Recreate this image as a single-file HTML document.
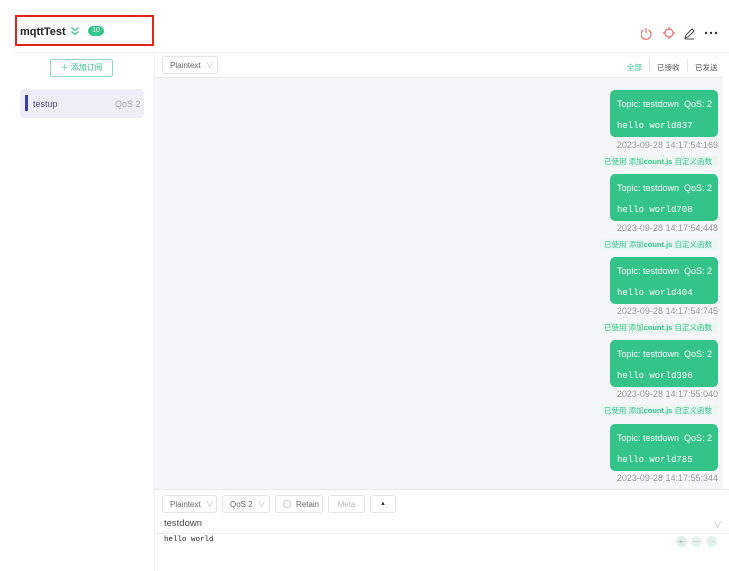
<!DOCTYPE html><html><head><meta charset="utf-8"><style>
*{box-sizing:border-box;margin:0;padding:0}
body{width:729px;height:571px;background:#fff;font-family:"Liberation Sans","Noto Sans CJK SC",sans-serif;position:relative;overflow:hidden;color:#333}
.a{position:absolute}
.sel{border:1px solid #e4e4e4;border-radius:3px;font-size:8px;color:#666;display:flex;align-items:center;padding:0 7px;height:18px;background:#fff;white-space:nowrap}
.bub{position:absolute;left:610px;width:108px;height:47px;background:#34c388;border-radius:5px;color:#fff}
.bub .t{position:absolute;left:7px;top:9px;font-size:9px}
.bub .q{position:absolute;right:6px;top:9px;font-size:9px}
.bub .m{position:absolute;left:7px;top:31px;font-size:9px;font-family:"Liberation Mono",monospace}
.ts{position:absolute;right:11px;font-size:9px;color:#999}
.tag{position:absolute;left:601px;width:117px;height:11px;background:#eaf8f1;font-size:7.5px;color:#34c388;line-height:11px;padding-left:3px;white-space:nowrap}
</style></head><body>
<div class="a" style="left:15px;top:15px;width:139px;height:31px;border:2px solid #e1251b"></div>
<div class="a" style="left:20px;top:26px;font-size:11px;font-weight:bold;color:#222">mqttTest</div>
<svg class="a" style="left:70px;top:26px" width="10" height="10"><path d="M1.5 1.5l3.5 3 3.5-3M1.5 5.5l3.5 3 3.5-3" fill="none" stroke="#34c388" stroke-width="1.2"/></svg>
<div class="a" style="left:88px;top:26px;width:16px;height:10px;border-radius:5px;background:#34c388;color:#fff;font-size:7px;text-align:center;line-height:10px">10</div>
<svg class="a" style="left:641px;top:26px" width="80" height="14"><g fill="none" stroke="#e66" stroke-width="1.2"><path d="M5 2v5M2.5 4a5 5 0 1 0 5 0"/><circle cx="28" cy="7" r="4"/><path d="M28 1v2M28 11v2M22 7h2M32 7h2"/></g><path d="M44 12l1-3 6-6 2 2-6 6zM44 13h9" fill="none" stroke="#444" stroke-width="1"/><g fill="#333"><circle cx="65" cy="7" r="1.2"/><circle cx="70" cy="7" r="1.2"/><circle cx="75" cy="7" r="1.2"/></g></svg>
<div class="a" style="left:15px;top:52px;width:714px;height:1px;background:#eee"></div>
<div class="a" style="left:154px;top:52px;width:1px;height:519px;background:#eee"></div>
<div class="a" style="left:50px;top:59px;width:63px;height:18px;border:1px solid #8ed9b7;border-radius:2px;font-size:8px;color:#34c388;text-align:center;line-height:16px">＋ 添加订阅</div>
<div class="a" style="left:20px;top:89px;width:124px;height:29px;background:#eeeef8;border-radius:4px"></div>
<div class="a" style="left:25px;top:95px;width:3px;height:16px;background:#3b3ea8"></div>
<div class="a" style="left:33px;top:99px;font-size:9px;color:#4a4a8a">testup</div>
<div class="a" style="left:115px;top:99px;font-size:9px;color:#aaa">QoS 2</div>
<div class="a" style="left:155px;top:78px;width:568px;height:411px;background:#f5f6f8"></div>
<div class="a" style="left:155px;top:77px;width:568px;height:1px;background:#e8e8e8"></div>
<div class="sel a" style="left:162px;top:56px;height:18px;width:56px">Plaintext <span style="margin-left:5px;color:#bbb">&#8744;</span></div>
<div class="a" style="left:627px;top:62px;font-size:7.5px;color:#34c388">全部</div>
<div class="a" style="left:657px;top:62px;font-size:7.5px;color:#555">已接收</div>
<div class="a" style="left:695px;top:62px;font-size:7.5px;color:#555">已发送</div>
<div class="a" style="left:649px;top:59px;width:1px;height:13px;background:#e5e5e5"></div>
<div class="a" style="left:687px;top:59px;width:1px;height:13px;background:#e5e5e5"></div>

<div class="bub" style="top:90px"><span class="t">Topic: testdown</span><span class="q">QoS: 2</span><span class="m">hello world837</span></div>
<div class="ts" style="top:140px">2023-09-28 14:17:54:169</div>
<div class="tag" style="top:156px">已使用 添加<b>count.js</b> 自定义函数</div>
<div class="bub" style="top:174px"><span class="t">Topic: testdown</span><span class="q">QoS: 2</span><span class="m">hello world708</span></div>
<div class="ts" style="top:223px">2023-09-28 14:17:54:448</div>
<div class="tag" style="top:239px">已使用 添加<b>count.js</b> 自定义函数</div>
<div class="bub" style="top:257px"><span class="t">Topic: testdown</span><span class="q">QoS: 2</span><span class="m">hello world404</span></div>
<div class="ts" style="top:306px">2023-09-28 14:17:54:745</div>
<div class="tag" style="top:322px">已使用 添加<b>count.js</b> 自定义函数</div>
<div class="bub" style="top:340px"><span class="t">Topic: testdown</span><span class="q">QoS: 2</span><span class="m">hello world396</span></div>
<div class="ts" style="top:389px">2023-09-28 14:17:55:040</div>
<div class="tag" style="top:405px">已使用 添加<b>count.js</b> 自定义函数</div>
<div class="bub" style="top:424px"><span class="t">Topic: testdown</span><span class="q">QoS: 2</span><span class="m">hello world785</span></div>
<div class="ts" style="top:473px">2023-09-28 14:17:55:344</div>

<div class="a" style="left:155px;top:489px;width:574px;height:1px;background:#e8e8e8"></div>
<div class="sel a" style="left:162px;top:495px;width:55px">Plaintext <span style="margin-left:5px;color:#bbb">&#8744;</span></div>
<div class="sel a" style="left:222px;top:495px;width:48px">QoS 2 <span style="margin-left:5px;color:#bbb">&#8744;</span></div>
<div class="sel a" style="left:275px;top:495px;width:48px"><span style="flex:none;display:inline-block;width:8px;height:8px;border:1px solid #ccc;border-radius:50%;margin-right:5px"></span>Retain</div>
<div class="sel a" style="left:328px;top:495px;width:37px;color:#bbb;justify-content:center">Meta</div>
<div class="sel a" style="left:370px;top:495px;width:26px;justify-content:center;color:#333;font-size:6px">&#9650;</div>
<div class="a" style="left:164px;top:518px;font-size:9.5px;color:#444">testdown</div>
<div class="a" style="left:713px;top:518px;font-size:9px;color:#bbb">&#8744;</div>
<div class="a" style="left:155px;top:533px;width:574px;height:1px;background:#eee"></div>
<div class="a" style="left:164px;top:536px;font-size:7.5px;font-family:'Liberation Mono',monospace;color:#222">hello world</div>
<div class="a" style="left:676px;top:536px;width:11px;height:11px;border-radius:50%;background:#dfeee6;font-size:7px;text-align:center;line-height:11px;color:#333">&#8592;</div>
<div class="a" style="left:691px;top:536px;width:11px;height:11px;border-radius:50%;background:#e6f2ec;font-size:7px;text-align:center;line-height:11px;color:#bbb">&#8212;</div>
<div class="a" style="left:706px;top:536px;width:11px;height:11px;border-radius:50%;background:#e6f2ec;font-size:7px;text-align:center;line-height:11px;color:#bbb">&#8594;</div>
</body></html>
